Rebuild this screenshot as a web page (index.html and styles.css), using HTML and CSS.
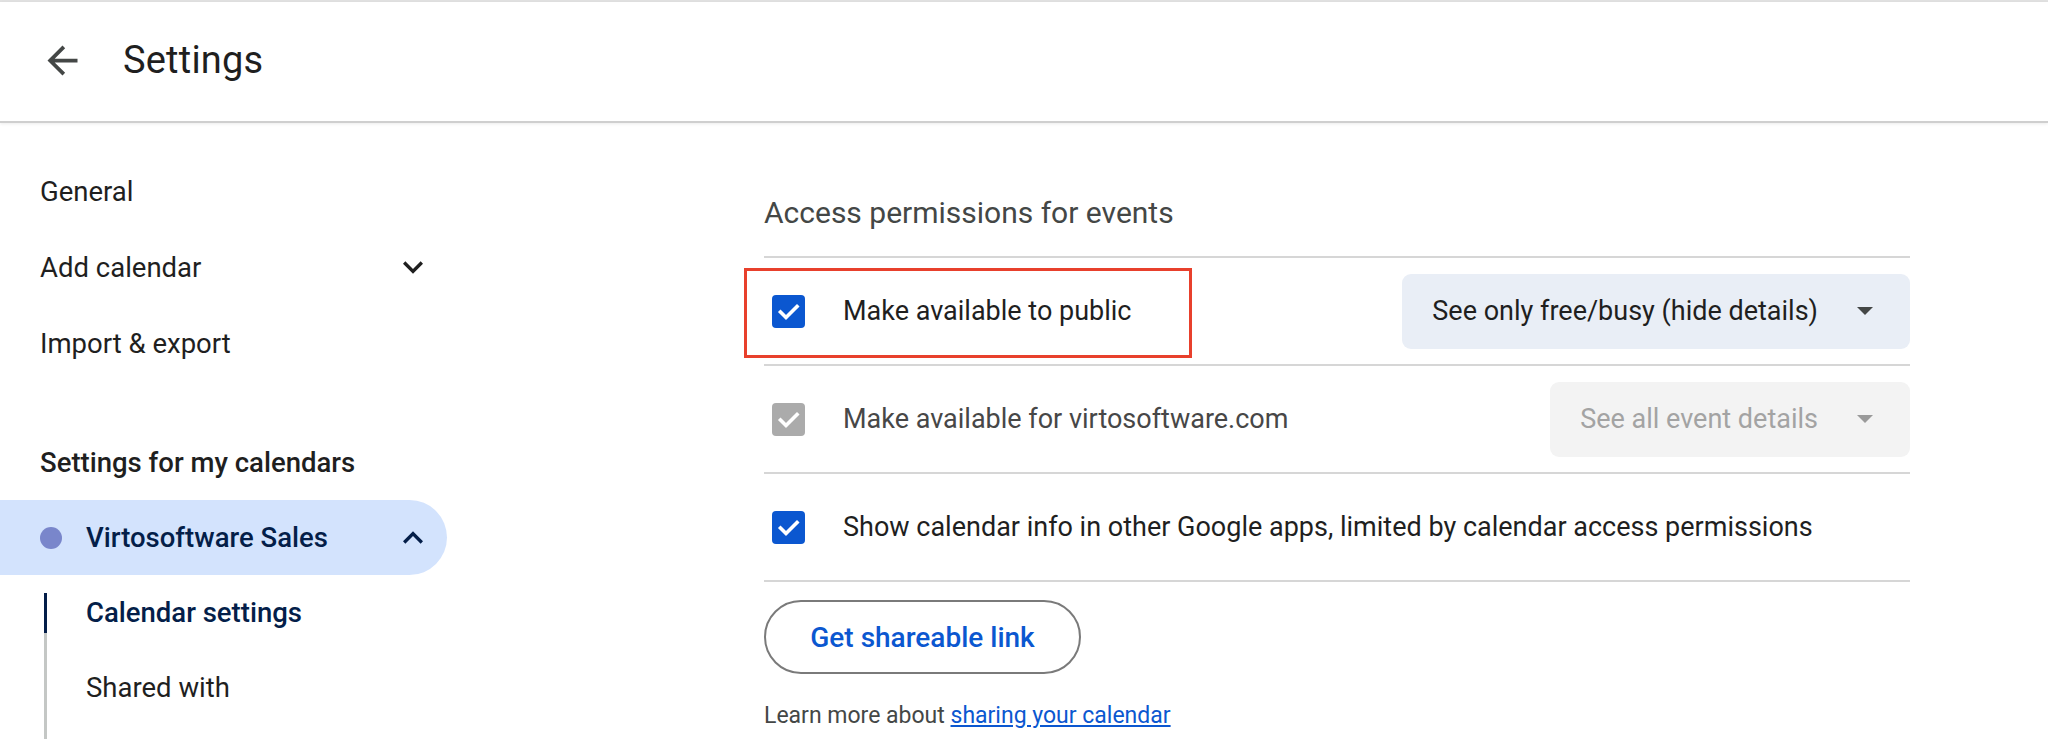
FILE: index.html
```html
<!DOCTYPE html>
<html lang="en">
<head>
<meta charset="utf-8">
<title>Settings</title>
<link rel="stylesheet" href="styles.css">
</head>
<body>
<div class="topline"></div>
<header class="appbar">
  <span class="back-btn">
    <svg class="back-icon" viewBox="0 0 24 24" width="45" height="45"><path d="M20 11H7.83l5.59-5.59L12 4l-8 8 8 8 1.41-1.41L7.83 13H20v-2z"/></svg>
  </span>
  <h1 class="title">Settings</h1>
</header>
<div class="layout">
  <nav class="sidebar">
    <div class="nav-item">General</div>
    <div class="nav-item">Add calendar
      <svg class="chev" viewBox="0 0 24 24" width="40" height="40"><path d="M16.59 8.59L12 13.17 7.41 8.59 6 10l6 6 6-6z"/></svg>
    </div>
    <div class="nav-item">Import &amp; export</div>
    <div class="nav-heading">Settings for my calendars</div>
    <div class="cal-item">
      <span class="dot"></span>Virtosoftware Sales
      <svg class="chev chev-up" viewBox="0 0 24 24" width="40" height="40"><path d="M12 8l-6 6 1.41 1.41L12 10.83l4.59 4.58L18 14z"/></svg>
    </div>
    <div class="sublist">
      <div class="sub-item current">Calendar settings</div>
      <div class="sub-item">Shared with</div>
    </div>
  </nav>
  <main class="content">
    <h2 class="section-title">Access permissions for events</h2>
    <div class="row">
      <span class="annotation"></span>
      <span class="cb cb-on"><svg viewBox="0 0 33 33" width="33" height="33"><polyline points="8.5,17 14,22.5 25,11.5"/></svg></span>
      <span class="label">Make available to public</span>
      <div class="select">
        <span class="select-text">See only free/busy (hide details)</span>
        <svg class="caret" viewBox="0 0 16 8" width="16" height="8"><path d="M0 0h16L8 8z"/></svg>
      </div>
    </div>
    <div class="row">
      <span class="cb cb-disabled"><svg viewBox="0 0 33 33" width="33" height="33"><polyline points="8.5,17 14,22.5 25,11.5"/></svg></span>
      <span class="label label-muted">Make available for virtosoftware.com</span>
      <div class="select select-disabled">
        <span class="select-text">See all event details</span>
        <svg class="caret" viewBox="0 0 16 8" width="16" height="8"><path d="M0 0h16L8 8z"/></svg>
      </div>
    </div>
    <div class="row">
      <span class="cb cb-on"><svg viewBox="0 0 33 33" width="33" height="33"><polyline points="8.5,17 14,22.5 25,11.5"/></svg></span>
      <span class="label">Show calendar info in other Google apps, limited by calendar access permissions</span>
    </div>
    <button class="share-btn">Get shareable link</button>
    <p class="learn">Learn more about <a href="#" class="link">sharing your calendar</a></p>
  </main>
</div>
</body>
</html>
```
FILE: styles.css
```css
* { box-sizing: border-box; }
html, body {
  margin: 0;
  padding: 0;
  height: 739px;
  overflow: hidden;
  background: #fff;
  font-family: Roboto, "Noto Sans", Arial, sans-serif;
  color: #1f1f1f;
}
.topline {
  height: 2px;
  background: #e1e1e1;
}
.appbar {
  height: 121px;
  display: flex;
  align-items: center;
  padding: 0 0 3px 0;
  border-bottom: 2px solid #cfcfcf;
  box-shadow: 0 1px 3px rgba(0,0,0,0.08);
  position: relative;
  z-index: 1;
}
.back-btn {
  display: flex;
  width: 45px;
  height: 45px;
  margin-left: 40px;
}
.back-icon { fill: #444746; }
.title {
  margin: 0 0 0 38px;
  font-size: 38px;
  font-weight: 400;
  color: #1f1f1f;
  letter-spacing: 0.2px;
}
.layout {
  display: flex;
}
.sidebar {
  width: 460px;
  flex: none;
  padding-top: 30px;
}
.nav-item {
  height: 76px;
  width: 447px;
  display: flex;
  align-items: center;
  padding: 0 14px 0 40px;
  font-size: 27.5px;
  color: #1f1f1f;
}
.chev {
  margin-left: auto;
  fill: #1f1f1f;
}
.nav-heading {
  margin-top: 43px;
  height: 76px;
  display: flex;
  align-items: center;
  padding-left: 40px;
  font-size: 27.5px;
  font-weight: 500;
  color: #1f1f1f;
}
.cal-item {
  height: 75px;
  width: 447px;
  display: flex;
  align-items: center;
  padding: 0 14px 0 40px;
  background: #d3e3fd;
  border-radius: 0 38px 38px 0;
  font-size: 27.5px;
  font-weight: 500;
  color: #041e49;
}
.cal-item .chev { fill: #041e49; }
.dot {
  width: 22px;
  height: 22px;
  border-radius: 50%;
  background: #7986cb;
  margin-right: 24px;
  flex: none;
}
.sublist {
  margin: 18px 0 0 44px;
  border-left: 3px solid #c4c7c5;
  height: 146px;
}
.sub-item {
  position: relative;
  height: 40px;
  line-height: 40px;
  margin-bottom: 35px;
  padding-left: 39px;
  font-size: 27.5px;
  color: #1f1f1f;
}
.sub-item:last-child { margin-bottom: 0; }
.sub-item.current {
  color: #041e49;
  font-weight: 500;
}
.sub-item.current::before {
  content: "";
  position: absolute;
  left: -3px;
  top: 0;
  bottom: 0;
  width: 3px;
  background: #041e49;
}
.content {
  margin-left: 304px;
  width: 1146px;
  padding-top: 70px;
}
.section-title {
  margin: 0;
  height: 63px;
  padding-top: 3px;
  line-height: 40px;
  font-size: 30px;
  font-weight: 400;
  color: #444746;
  border-bottom: 2px solid #d6d6d6;
  box-sizing: content-box;
  margin-top: -3px;
}
.row {
  position: relative;
  height: 108px;
  display: flex;
  align-items: center;
  border-bottom: 2px solid #d6d6d6;
}
.annotation {
  position: absolute;
  left: -20px;
  top: 10px;
  width: 448px;
  height: 90px;
  border: 3px solid #e8402c;
}
.cb {
  width: 33px;
  height: 33px;
  border-radius: 4px;
  margin-left: 8px;
  flex: none;
  display: flex;
}
.cb svg polyline {
  fill: none;
  stroke: #fff;
  stroke-width: 3.6;
  stroke-linecap: square;
}
.cb-on { background: #0b57d0; }
.cb-disabled { background: #ababab; }
.label {
  margin-left: 38px;
  font-size: 27px;
  color: #1f1f1f;
}
.label-muted { color: #474747; }
.select {
  margin-left: auto;
  height: 75px;
  display: flex;
  align-items: center;
  padding: 0 37px 0 30px;
  background: #e9eef6;
  border-radius: 9px;
  font-size: 27px;
  color: #1f1f1f;
}
.caret {
  margin-left: 39px;
  fill: #444746;
}
.select-disabled {
  background: #f3f3f3;
  color: #a3a3a3;
}
.select-disabled .caret { fill: #9a9a9a; }
.share-btn {
  display: block;
  margin-top: 18px;
  width: 317px;
  height: 74px;
  border: 2px solid #7a7a7a;
  border-radius: 37px;
  background: #fff;
  font-family: Roboto, "Noto Sans", Arial, sans-serif;
  font-size: 28px;
  font-weight: 500;
  color: #0b57d0;
  padding: 0;
}
.learn {
  margin: 27px 0 0 0;
  line-height: 30px;
  font-size: 23px;
  color: #444746;
}
.link {
  color: #0b57d0;
  text-decoration: underline;
}
```
